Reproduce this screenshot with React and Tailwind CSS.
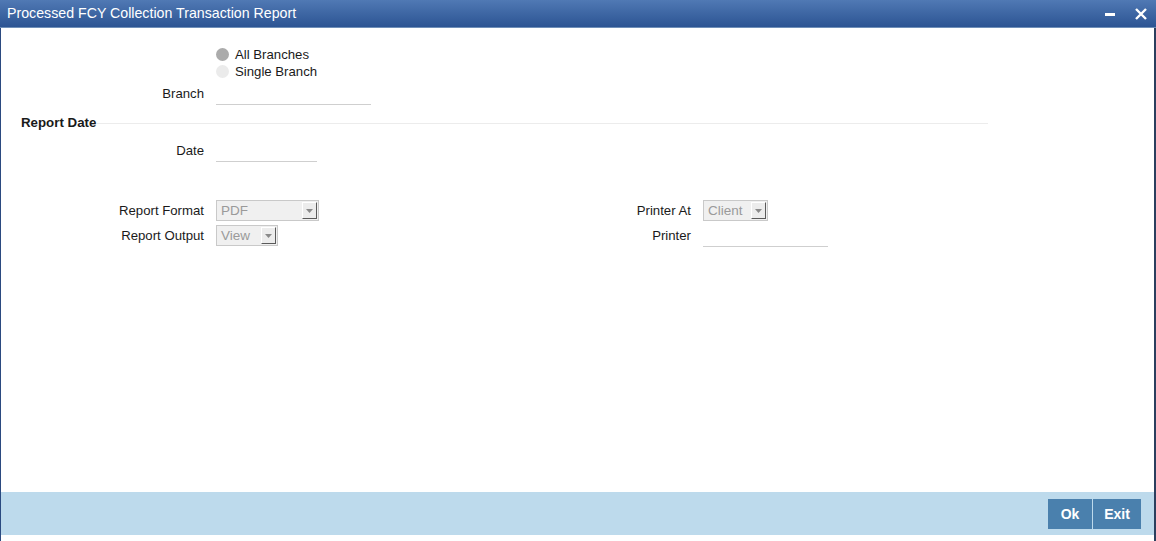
import React from 'react';

const font = { fontFamily: '"Liberation Sans", Arial, sans-serif' };

const Select = ({ value, width }) => (
  <div className={`relative h-[21px] ${width} border border-[#c9c9c9] bg-[#f0f0f0] flex items-center`}>
    <span className="pl-[4px] text-[13.5px] text-[#9a9a9a] leading-none">{value}</span>
    <span className="absolute right-[1px] top-[1px] h-[17px] w-[15px] bg-[#ececec] border-t border-l border-t-white border-l-white border-r border-b border-r-[#5a5a5a] border-b-[#5a5a5a] flex items-center justify-center">
      <svg width="7" height="4" viewBox="0 0 7 4">
        <path d="M0 0h7L3.5 4z" fill="#8a8a8a" />
      </svg>
    </span>
  </div>
);

const Label = ({ children, w = 'w-[203px]' }) => (
  <div className={`${w} shrink-0 text-right text-[13.2px] text-[#1a1a1a]`}>{children}</div>
);

export default function App() {
  return (
    <div className="w-[1156px] h-[541px] bg-white flex flex-col" style={font}>
      {/* title bar */}
      <div className="h-[28px] shrink-0 flex items-center justify-between bg-gradient-to-b from-[#5079b4] to-[#2c5493] border-b border-[#6f8fb8]">
        <span className="pl-[7px] text-[14.2px] text-white">Processed FCY Collection Transaction Report</span>
        <div className="flex items-center gap-[20px] pr-[9px]">
          <svg width="10" height="10" viewBox="0 0 10 10">
            <rect x="0" y="4" width="10" height="3" fill="white" />
          </svg>
          <svg width="12" height="12" viewBox="0 0 12 12">
            <path d="M1 1L11 11M11 1L1 11" stroke="white" strokeWidth="2.4" />
          </svg>
        </div>
      </div>

      {/* body */}
      <div className="flex-1 border-l border-l-[#2b4a80] border-r-2 border-r-[#2b3f5e] flex flex-col">
        <div className="flex-1 pt-[18px]">
          <div className="flex">
            <div className="w-[215px] shrink-0" />
            <div className="flex flex-col">
              <div className="h-[17px] flex items-center gap-[6px]">
                <span className="w-[13px] h-[13px] rounded-full bg-[#ababab]" />
                <span className="text-[13.2px] text-[#1a1a1a]">All Branches</span>
              </div>
              <div className="h-[17px] flex items-center gap-[6px]">
                <span className="w-[13px] h-[13px] rounded-full bg-[#ebebeb]" />
                <span className="text-[13.2px] text-[#1a1a1a]">Single Branch</span>
              </div>
            </div>
          </div>

          <div className="flex items-center gap-[12px] mt-[4px] h-[20px]">
            <Label>Branch</Label>
            <div className="w-[155px] h-[20px] border-b border-[#cfcfcf] mt-[1px]" />
          </div>

          <div className="flex items-center mt-[9px] h-[20px] w-[987px]">
            <span className="pl-[20px] pr-[1px] text-[13.3px] font-bold text-[#1a1a1a]">Report Date</span>
            <div className="flex-1 border-t border-[#ececec]" />
          </div>

          <div className="flex items-center gap-[12px] mt-[8px] h-[20px]">
            <Label>Date</Label>
            <div className="w-[101px] h-[20px] border-b border-[#cfcfcf] mt-[1px]" />
          </div>

          <div className="flex mt-[39px]">
            <div className="flex flex-col gap-[4px]">
              <div className="flex items-center gap-[12px]">
                <Label>Report Format</Label>
                <Select value="PDF" width="w-[103px]" />
              </div>
              <div className="flex items-center gap-[12px]">
                <Label>Report Output</Label>
                <Select value="View" width="w-[62px]" />
              </div>
            </div>
            <div className="flex flex-col gap-[4px] ml-[53px]">
              <div className="flex items-center gap-[12px]">
                <Label w="w-[319px]">Printer At</Label>
                <Select value="Client" width="w-[65px]" />
              </div>
              <div className="flex items-center gap-[12px] h-[21px]">
                <Label w="w-[319px]">Printer</Label>
                <div className="w-[125px] h-[21px] border-b border-[#cfcfcf] mt-[1px]" />
              </div>
            </div>
          </div>
        </div>

        {/* footer */}
        <div className="h-[43px] shrink-0 bg-[#bddaec] flex items-center justify-end pr-[13px]">
          <div className="flex gap-[1px] mt-[1px]">
            <button className="w-[44px] h-[30px] bg-[#4a80ad] text-white text-[14px] font-bold">Ok</button>
            <button className="w-[48px] h-[30px] bg-[#4a80ad] text-white text-[14px] font-bold">Exit</button>
          </div>
        </div>
        <div className="h-[6px] shrink-0" />
      </div>
    </div>
  );
}
